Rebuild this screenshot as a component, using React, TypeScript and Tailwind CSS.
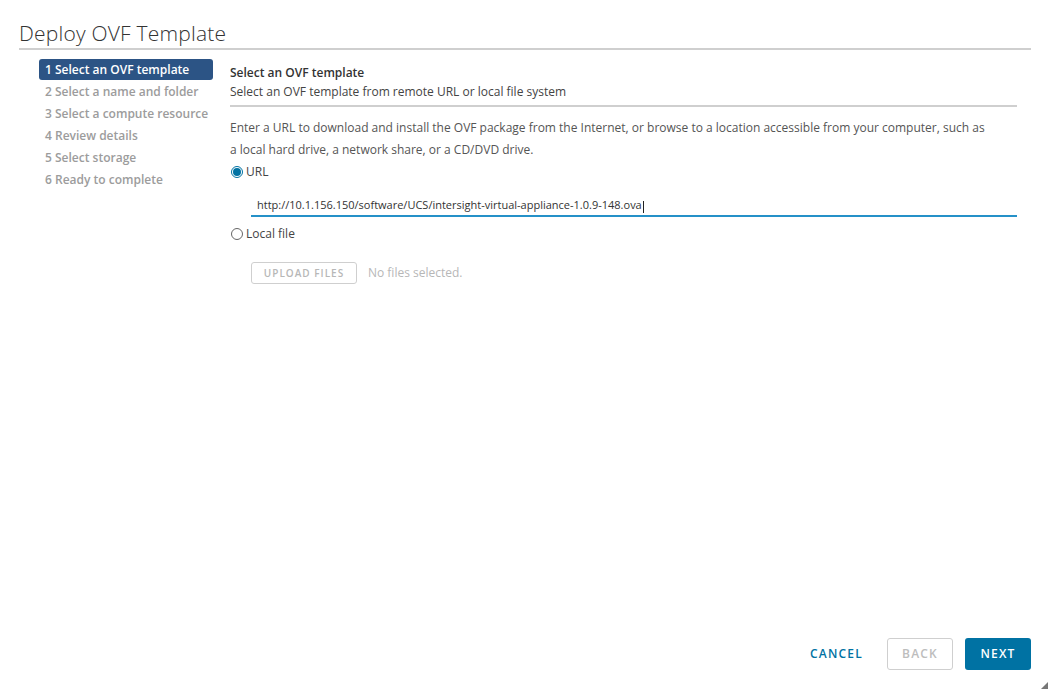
const steps = [
  "1 Select an OVF template",
  "2 Select a name and folder",
  "3 Select a compute resource",
  "4 Review details",
  "5 Select storage",
  "6 Ready to complete",
];

function Radio({ checked }: { checked?: boolean }) {
  return checked ? (
    <span className="inline-flex h-[12px] w-[12px] items-center justify-center rounded-full border border-[#0072a3] bg-white">
      <span className="h-[8px] w-[8px] rounded-full bg-[#0072a3]" />
    </span>
  ) : (
    <span className="inline-block h-[12px] w-[12px] rounded-full border border-[#666]" />
  );
}

export default function App() {
  return (
    <div className="relative flex h-[692px] w-[1051px] flex-col bg-white font-['Open_Sans',sans-serif] text-[#565656]">
      <div className="ml-[19px] mr-[20px] mt-[19px] border-b-2 border-[#cfcfcf] pb-[1px]">
        <h1 className="text-[21px] font-light leading-[28px] tracking-[0.01em] text-[#333]">Deploy OVF Template</h1>
      </div>

      <div className="flex flex-1">
        <nav className="ml-[39px] mt-[9px] w-[174px]">
          {steps.map((s, i) => (
            <div
              key={s}
              className={
                i === 0
                  ? "mb-[1px] h-[21px] whitespace-nowrap rounded-[3px] bg-[#2c5485] px-[6px] text-[12px] font-semibold leading-[21px] text-white"
                  : "h-[22px] whitespace-nowrap px-[6px] text-[12px] font-semibold leading-[22px] text-[#9c9c9c]"
              }
            >
              {s}
            </div>
          ))}
        </nav>

        <main className="ml-[17px] mt-[14px] w-[787px] text-[12px]">
          <div className="font-semibold leading-[18px] text-[#333]">Select an OVF template</div>
          <div className="mt-[1px] leading-[18px] text-[#444]">
            Select an OVF template from remote URL or local file system
          </div>
          <div className="mt-[4px] border-b-2 border-[#cfcfcf]" />

          <p className="mt-[10px] w-[755px] leading-[22px] text-[#555]">
            Enter a URL to download and install the OVF package from the Internet, or browse to a location accessible from your computer, such as
            a local hard drive, a network share, or a CD/DVD drive.
          </p>
          <label className="mt-[1px] flex h-[20px] items-center gap-[3px] pl-[1px] text-[#444]">
            <Radio checked /> URL
          </label>

          <div className="ml-[21px] mt-[14px] flex h-[21px] items-end border-b-2 border-[#2591c8] pb-[2px] pl-[6px] text-[11px] text-[#333]">
            http://10.1.156.150/software/UCS/intersight-virtual-appliance-1.0.9-148.ova
            <span className="ml-[1px] inline-block h-[12px] w-px bg-[#222]" />
          </div>

          <label className="mt-[7px] flex h-[20px] items-center gap-[3px] pl-[1px] text-[#444]">
            <Radio /> Local file
          </label>

          <div className="ml-[21px] mt-[18px] flex items-center gap-[11px]">
            <button className="h-[22px] w-[106px] rounded-[3px] border border-[#cfcfcf] text-[10px] font-semibold tracking-[0.1em] text-[#b7b7b7]">
              UPLOAD FILES
            </button>
            <span className="text-[12px] text-[#b7b7b7]">No files selected.</span>
          </div>
        </main>
      </div>

      <div className="mb-[22px] mr-[20px] flex items-center justify-end gap-[12px]">
        <button className="h-[32px] px-[12px] text-[12px] font-semibold tracking-[0.1em] text-[#0072a3]">
          CANCEL
        </button>
        <button className="h-[32px] w-[66px] rounded-[3px] border border-[#cfcfcf] text-[12px] font-semibold tracking-[0.1em] text-[#bdbdbd]">
          BACK
        </button>
        <button className="h-[32px] w-[66px] rounded-[3px] bg-[#0072a3] text-[12px] font-semibold tracking-[0.1em] text-white">
          NEXT
        </button>
      </div>

      <svg className="absolute bottom-[3px] right-[3px]" width="7" height="7" viewBox="0 0 7 7">
        <path d="M7 0 L7 7 L0 7 Z" fill="#777" />
      </svg>
    </div>
  );
}
